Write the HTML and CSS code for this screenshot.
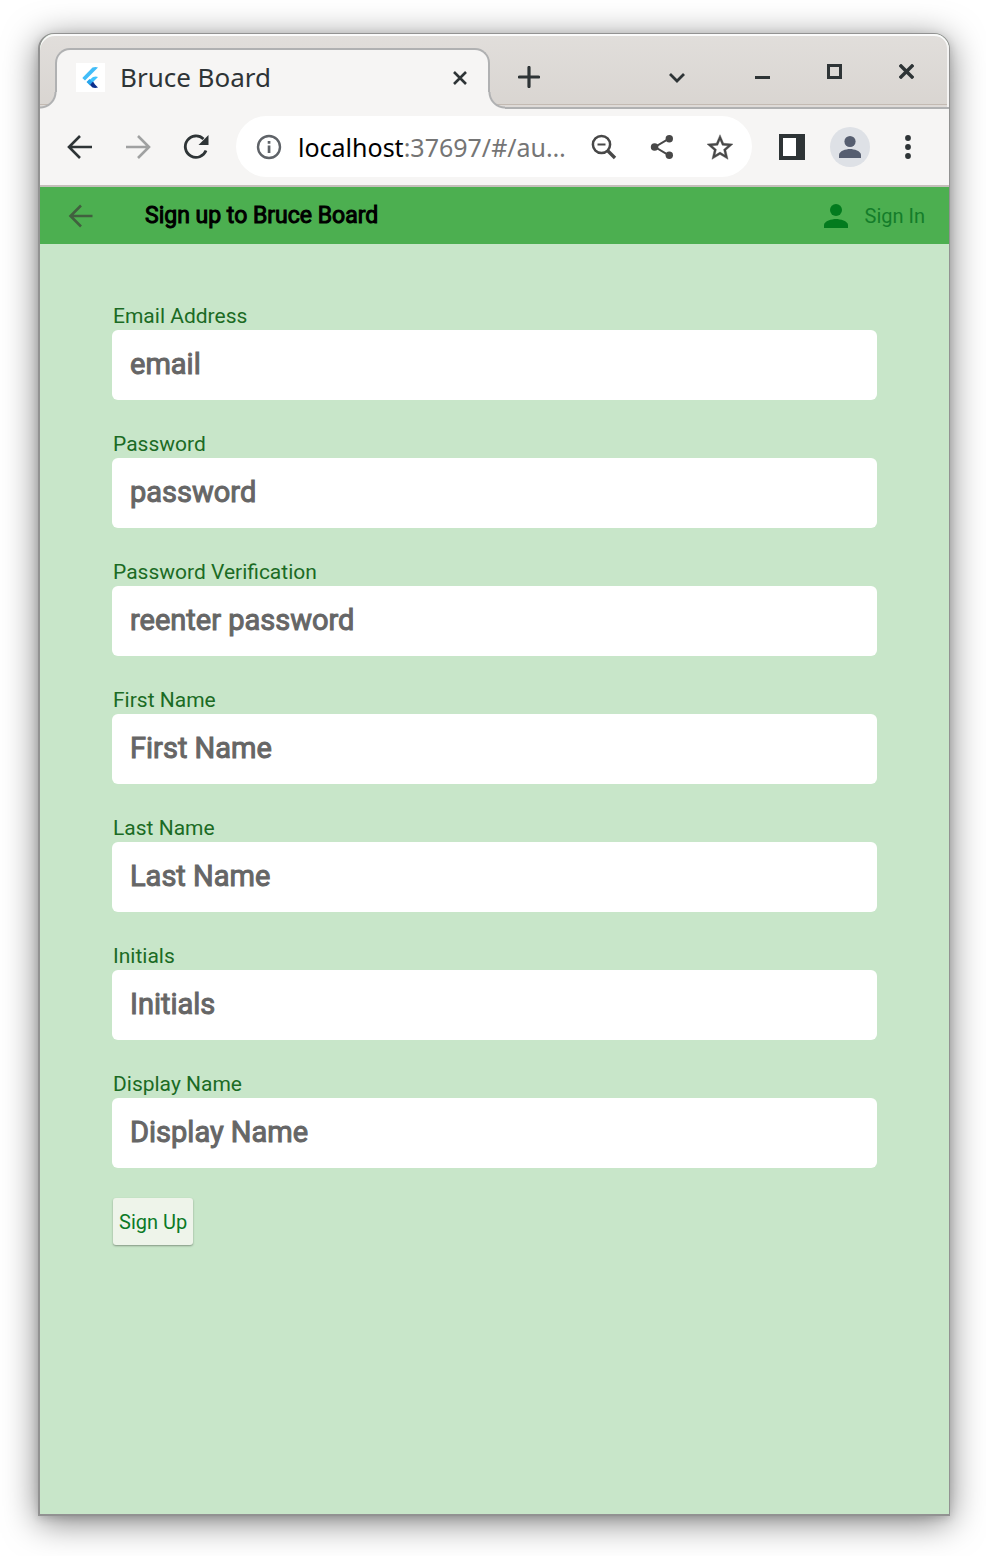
FILE: index.html
```html
<!DOCTYPE html>
<html lang="en">
<head>
<meta charset="utf-8">
<meta name="viewport" content="width=device-width, initial-scale=1">
<title>Bruce Board</title>
<link rel="stylesheet" href="styles.css">
</head>
<body>
<div class="window">
  <header class="titlebar">
    <div class="tab">
      <svg class="favicon" viewBox="0 0 29 29" aria-hidden="true">
        <path fill="#42bdf8" d="M16.500 4.500q3-1 5.500 0L9 17.500 6.300 15z"/>
        <path fill="#40c4ff" d="M17 14q3-1 5 0l-5.500 5.500L14 22l-3-3z"/>
        <path fill="#29a5ec" d="M10.500 19l3-3 3.500 3.500-3 3z"/>
        <path fill="#0b2f8d" d="M14 22l3-3.500 2 3 3 3q-3 .8-5.500 0z"/>
      </svg>
      <span class="tab-title">Bruce Board</span>
      <button class="tab-close" type="button" aria-label="Close tab">
        <svg width="14" height="14" viewBox="0 0 14 14"><path d="M1 1l12 12M13 1L1 13" fill="none" stroke="#2e3436" stroke-width="2.600"/></svg>
      </button>
    </div>
    <button class="new-tab" type="button" aria-label="New tab">
      <svg width="22" height="22" viewBox="0 0 22 22"><path d="M11 1.500v19M1.500 11h19" fill="none" stroke="#2e3436" stroke-width="3.200" stroke-linecap="round"/></svg>
    </button>
    <button class="tab-search" type="button" aria-label="Search tabs">
      <svg width="18" height="12" viewBox="0 0 18 12"><path d="M2 2l7 7 7-7" fill="none" stroke="#2e3436" stroke-width="2.800"/></svg>
    </button>
    <div class="window-controls">
      <button type="button" aria-label="Minimize"><svg width="15" height="14" viewBox="0 0 15 14"><path d="M0 11h15v3H0z" fill="#2e3436"/></svg></button>
      <button type="button" aria-label="Maximize"><svg width="15" height="15" viewBox="0 0 15 15"><path d="M1.500 1.500h12v12h-12z" fill="none" stroke="#2e3436" stroke-width="3"/></svg></button>
      <button type="button" aria-label="Close"><svg width="15" height="15" viewBox="0 0 15 15"><path d="M2 2l11 11M13 2L2 13" fill="none" stroke="#2e3436" stroke-width="3.400" stroke-linecap="square"/></svg></button>
    </div>
  </header>

  <nav class="toolbar" aria-label="Browser">
    <button class="slot" type="button" aria-label="Back"><svg width="26" height="26" viewBox="0 0 26 26"><path d="M25 13H3M13 2L2 13l11 11" fill="none" stroke="#2e3436" stroke-width="2.600"/></svg></button>
    <button class="slot" type="button" aria-label="Forward"><svg width="26" height="26" viewBox="0 0 26 26"><path d="M1 13h22M13 2l11 11-11 11" fill="none" stroke="#a0a1a1" stroke-width="2.600"/></svg></button>
    <button class="slot" type="button" aria-label="Reload"><svg width="26" height="26" viewBox="0 0 26 26"><path d="M23 16.500A10.700 10.700 0 1 1 20.500 5" fill="none" stroke="#2e3436" stroke-width="2.800"/><path d="M25.500 1v10h-10z" fill="#2e3436"/></svg></button>
    <div class="omnibox">
      <button class="slot" type="button" aria-label="Site information"><svg width="26" height="26" viewBox="0 0 26 26"><circle cx="13" cy="13" r="11" fill="none" stroke="#5f6368" stroke-width="2.400"/><path d="M11.700 11.500h2.700v7.500h-2.700zM11.700 7h2.700v2.700h-2.700z" fill="#5f6368"/></svg></button>
      <button class="address" type="button">localhost<span class="path">:37697/#/au…</span></button>
      <button class="slot" type="button" aria-label="Zoom"><svg width="26" height="26" viewBox="0 0 26 26"><circle cx="10.500" cy="10.500" r="8.600" fill="none" stroke="#484848" stroke-width="2.500"/><path d="M6.500 10.500h8" stroke="#484848" stroke-width="2"/><path d="M16.500 16.500l7.500 7.500" stroke="#484848" stroke-width="3.400"/></svg></button>
      <button class="slot" type="button" aria-label="Share"><svg width="26" height="26" viewBox="0 0 26 26"><path d="M20 4.700L6 13l14 8.300" fill="none" stroke="#484848" stroke-width="2"/><g fill="#484848"><circle cx="20.300" cy="4.700" r="3.700"/><circle cx="5.600" cy="13" r="3.800"/><circle cx="20.300" cy="21.300" r="3.700"/></g></svg></button>
      <button class="slot" type="button" aria-label="Bookmark"><svg width="26" height="26" viewBox="2 1.500 20 20"><path fill="#484848" stroke="#484848" stroke-width=".3" d="M22 9.240l-7.190-.62L12 2 9.190 8.630 2 9.240l5.460 4.730L5.820 21 12 17.270 18.180 21l-1.630-7.030L22 9.240zM12 15.400l-3.760 2.270 1-4.280-3.320-2.880 4.380-.38L12 6.100l1.710 4.040 4.380.38-3.320 2.880 1 4.280L12 15.400z"/></svg></button>
    </div>
    <button class="slot" type="button" aria-label="Side panel"><svg width="26" height="26" viewBox="0 0 26 26"><path d="M0 0h26v26H0z" fill="#2e3436"/><path d="M4 4h13v18H4z" fill="#fff"/></svg></button>
    <button class="slot" type="button" aria-label="Profile"><svg width="40" height="40" viewBox="0 0 40 40"><circle cx="20" cy="20" r="20" fill="#dee1e6"/><g fill="#565e70"><circle cx="20" cy="14.500" r="5.600"/><path d="M9 31v-3c0-4 7-6 11-6s11 2 11 6v3z"/></g></svg></button>
    <button class="slot" type="button" aria-label="Menu"><svg width="26" height="26" viewBox="0 0 26 26"><g fill="#2e3436"><circle cx="13" cy="4" r="2.900"/><circle cx="13" cy="13" r="2.900"/><circle cx="13" cy="22" r="2.900"/></g></svg></button>
  </nav>

  <div class="appbar">
    <button class="slot" type="button" aria-label="Go back"><svg width="26" height="26" viewBox="0 0 26 26"><path d="M24.500 13H3.500M13 2.500L2.500 13 13 23.500" fill="none" stroke="#41603f" stroke-width="2.600"/></svg></button>
    <h1 class="app-title">Sign up to Bruce Board</h1>
    <a class="sign-in" href="#signin">
      <svg width="24" height="24" viewBox="0 0 24 24" aria-hidden="true"><g fill="#037b1e"><circle cx="12" cy="6" r="6"/><path d="M0 24v-3c0-4 8-6 12-6s12 2 12 6v3z"/></g></svg>
      <span>Sign In</span>
    </a>
  </div>

  <main class="page">
    <form class="form">
      <div class="field"><label for="email">Email Address</label><input id="email" type="email" placeholder="email"></div>
      <div class="field"><label for="password">Password</label><input id="password" type="password" placeholder="password"></div>
      <div class="field"><label for="verify">Password Verification</label><input id="verify" type="password" placeholder="reenter password"></div>
      <div class="field"><label for="first">First Name</label><input id="first" type="text" placeholder="First Name"></div>
      <div class="field"><label for="last">Last Name</label><input id="last" type="text" placeholder="Last Name"></div>
      <div class="field"><label for="initials">Initials</label><input id="initials" type="text" placeholder="Initials"></div>
      <div class="field"><label for="display">Display Name</label><input id="display" type="text" placeholder="Display Name"></div>
      <button class="submit" type="button">Sign Up</button>
    </form>
  </main>
</div>
</body>
</html>
```

FILE: styles.css
```css
* { box-sizing: border-box; }

body {
  margin: 0;
  min-height: 100vh;
  padding: 33px 36px 40px 38px;
  display: flex;
  background: #fff;
  font-family: Roboto, sans-serif;
}

button {
  border: 0;
  padding: 0;
  background: none;
  font: inherit;
  color: inherit;
}

svg { display: block; flex: none; }

.window {
  flex: 1;
  min-width: 0;
  display: flex;
  flex-direction: column;
  border: 1px solid #929292;
  border-width: 1px 1px 2px 2px;
  border-radius: 16px 16px 0 0;
  overflow: hidden;
  background: #c8e6c9;
  box-shadow: 0 6px 34px rgba(0, 0, 0, 0.5), 0 2px 8px rgba(0, 0, 0, 0.15);
}

/* Title bar with the browser tab */
.titlebar {
  display: flex;
  height: 75px;
  padding-left: 15px;
  border-bottom: 2px solid #b0b1b2;
  border-radius: 15px 15px 0 0;
  background: linear-gradient(#e1dedb, #d9d5d1);
  box-shadow: inset 0 2px #fafafa, inset -2px 0 #f4f3f2, inset 0 -2px #dedad7, inset 0 -3px #c3bab2;
}

.tab {
  position: relative;
  width: 435px;
  height: 61px;
  margin-top: 14px;
  display: flex;
  align-items: center;
  gap: 15px;
  padding: 0 21px 4px 19px;
  border: 2px solid #b0b1b2;
  border-bottom: 0;
  border-radius: 15px 15px 0 0;
  background: #f6f5f4;
}

.tab::before,
.tab::after {
  content: "";
  position: absolute;
  bottom: 0;
  width: 17px;
  height: 17px;
}

.tab::before {
  right: 100%;
  background: radial-gradient(circle at 0 0, transparent 14px, #b0b1b2 15px, #b0b1b2 16px, #f6f5f4 17px);
}

.tab::after {
  left: 100%;
  background: radial-gradient(circle at 100% 0, transparent 14px, #b0b1b2 15px, #b0b1b2 16px, #f6f5f4 17px);
}

.favicon { width: 29px; height: 29px; background: #fff; }

.tab-title {
  flex: 1;
  padding-bottom: 2px;
  font: 26px/32px "Noto Sans", sans-serif;
  color: #2e3436;
}

.new-tab { margin: 0 auto 16px 28px; align-self: end; padding-bottom: 3px; }

.tab-search { padding: 14px 69px 0 0; }

.window-controls {
  display: flex;
  gap: 57px;
  padding-right: 35px;
  padding-top: 2px;
}

/* Toolbar */
.toolbar {
  display: flex;
  align-items: center;
  height: 78px;
  padding: 0 12px 1px 11px;
  border-bottom: 2px solid #c4bfba;
  background: #f6f5f4;
}

.slot {
  flex: none;
  width: 58px;
  height: 58px;
  display: flex;
  align-items: center;
  justify-content: center;
}

.omnibox {
  flex: 1;
  min-width: 0;
  display: flex;
  align-items: center;
  height: 61px;
  margin: 0 11px;
  padding: 0 3px 0 4px;
  border-radius: 31px;
  background: #fff;
}

.address {
  flex: 1;
  min-width: 0;
  overflow: hidden;
  text-align: left;
  white-space: nowrap;
  font: 25px/32px "Noto Sans", sans-serif;
  color: #000;
}

.path { color: #757575; }

/* Application bar */
.appbar {
  display: flex;
  align-items: center;
  height: 57px;
  padding: 0 24px 0 12px;
  background: #4caf50;
}

.app-title {
  flex: 1;
  margin: 0 0 0 35px;
  font-size: 23px;
  line-height: 28px;
  font-weight: 400;
  -webkit-text-stroke: 1px #000;
  color: #000;
}

.sign-in {
  display: flex;
  align-items: center;
  gap: 17px;
  font-size: 20px;
  line-height: 24px;
  color: #147d2a;
  text-decoration: none;
}

/* Sign-up form */
.page { flex: 1; padding: 58px 72px; }

.form {
  display: flex;
  flex-direction: column;
  align-items: stretch;
  gap: 30px;
}

.field { display: flex; flex-direction: column; }

.field label {
  padding: 1px;
  font-size: 21px;
  line-height: 26px;
  color: #1b6b24;
}

.field input {
  width: 100%;
  height: 70px;
  padding: 0 18px 2px;
  border: 0;
  border-radius: 6px;
  background: #fff;
  font: 29px/36px Roboto, sans-serif;
  color: #333;
}

.field input::placeholder {
  color: #666;
  opacity: 1;
  -webkit-text-stroke: 1px #666;
}

.submit {
  align-self: flex-start;
  height: 47px;
  margin-left: 1px;
  padding: 0 6px;
  border-radius: 3px;
  background: #eef4ea;
  font-size: 20px;
  line-height: 24px;
  color: #0b7a26;
  box-shadow: 0 1px 2px rgba(0, 0, 0, 0.35);
}
```
